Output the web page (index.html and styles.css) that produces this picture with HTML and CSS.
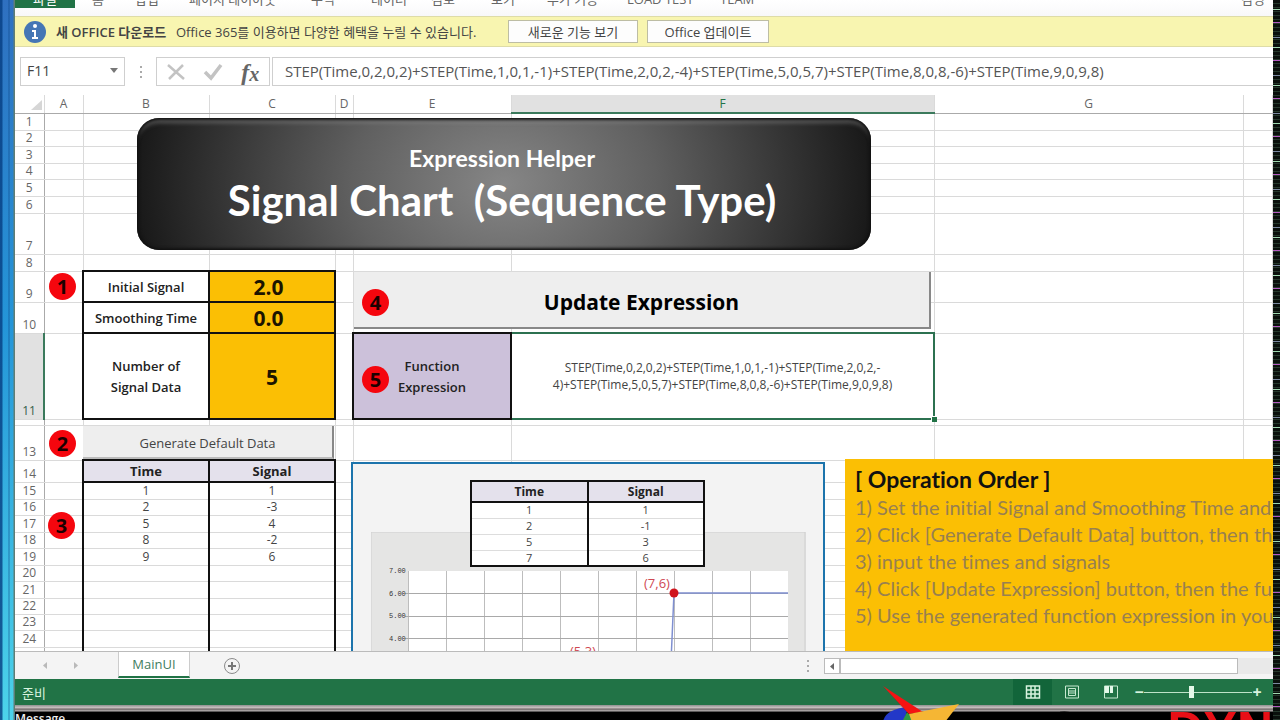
FILE: index.html
```html
<!DOCTYPE html>
<html lang="ko">
<head>
<meta charset="utf-8">
<title>Signal Chart</title>
<link rel="stylesheet" href="styles.css">
</head>
<body>
<div class="edge-left"></div>
<main class="app">
  <nav class="ribbon">
    <a class="file" href="#">파일</a>
    <a class="t-home" href="#">홈</a><a class="t-ins" href="#">삽입</a><a class="t-page" href="#">페이지 레이아웃</a><a class="t-short" href="#">수식</a><a class="t-short" href="#">데이터</a><a class="t-short" href="#">검토</a><a class="t-rev" href="#">보기</a><a class="t-add" href="#">추가 기능</a><a class="t-load" href="#">LOAD TEST</a><a class="t-team" href="#">TEAM</a>
    <span class="user">김영</span>
  </nav>
  <section class="notice">
    <svg width="24" height="24" viewBox="0 0 24 24"><circle cx="12" cy="12" r="11" fill="#4576b5"/><circle cx="12" cy="6" r="2" fill="#fff"/><path d="M9 10h4v7h2v2H9v-2h2v-5H9z" fill="#fff"/></svg>
    <strong>새 OFFICE 다운로드</strong>
    <span class="offer">Office 365를 이용하면 다양한 혜택을 누릴 수 있습니다.</span>
    <button class="b-new">새로운 기능 보기</button>
    <button class="b-upd">Office 업데이트</button>
  </section>
  <section class="formula">
    <div class="namebox"><input type="text" value="F11" aria-label="Name Box"><button aria-label="Open name list"><svg width="8" height="5"><path d="M0 0h8L4 5z" fill="#777"/></svg></button></div>
    <svg class="grip" width="3" height="14"><path d="M1 1h2v2H1zM1 6h2v2H1zM1 11h2v2H1z" fill="#aaa"/></svg>
    <div class="tools">
      <button aria-label="Cancel"><svg width="20" height="18"><path d="M2 2l16 14M17 2L3 16" stroke="#c3c3c3" stroke-width="2.500" fill="none"/></svg></button>
      <button aria-label="Enter"><svg width="20" height="18"><path d="M2 9l6 6L18 2" stroke="#c3c3c3" stroke-width="3.500" fill="none"/></svg></button>
      <button class="fx" aria-label="Insert Function">f<small>x</small></button>
    </div>
    <input class="expr" type="text" aria-label="Formula" value="STEP(Time,0,2,0,2)+STEP(Time,1,0,1,-1)+STEP(Time,2,0,2,-4)+STEP(Time,5,0,5,7)+STEP(Time,8,0,8,-6)+STEP(Time,9,0,9,8)">
  </section>
  <section class="sheet">
    <table class="grid">
      <colgroup><col class="c0"><col class="ca"><col class="cb"><col class="cb"><col class="cd"><col class="ce"><col class="cf"><col class="cg"><col></colgroup>
      <thead><tr><th class="corner"><svg width="11" height="10"><path d="M11 0v10H0z" fill="#d6d6d6"/></svg></th><th>A</th><th>B</th><th>C</th><th>D</th><th>E</th><th class="on">F</th><th>G</th><th></th></tr></thead>
      <tbody>
      <tr class="r17"><th>1</th><td></td><td></td><td></td><td></td><td></td><td></td><td></td><td></td></tr>
      <tr class="r16"><th>2</th><td></td><td></td><td></td><td></td><td></td><td></td><td></td><td></td></tr>
      <tr class="r17"><th>3</th><td></td><td></td><td></td><td></td><td></td><td></td><td></td><td></td></tr>
      <tr class="r16"><th>4</th><td></td><td></td><td></td><td></td><td></td><td></td><td></td><td></td></tr>
      <tr class="r17"><th>5</th><td></td><td></td><td></td><td></td><td></td><td></td><td></td><td></td></tr>
      <tr class="r17"><th>6</th><td></td><td></td><td></td><td></td><td></td><td></td><td></td><td></td></tr>
      <tr class="r41"><th>7</th><td></td><td></td><td></td><td></td><td></td><td></td><td></td><td></td></tr>
      <tr class="r17"><th>8</th><td></td><td></td><td></td><td></td><td></td><td></td><td></td><td></td></tr>
      <tr class="r31"><th>9</th><td></td><td class="box label">Initial Signal</td><td class="box value shift">2.0</td><td></td><td></td><td></td><td></td><td></td></tr>
      <tr class="r31"><th>10</th><td></td><td class="box label">Smoothing Time</td><td class="box value shift">0.0</td><td></td><td></td><td></td><td></td><td></td></tr>
      <tr class="r86"><th class="on">11</th><td></td><td class="box label">Number of<br>Signal Data</td><td class="box value five">5</td><td></td><td class="box label fn">Function<br>Expression</td><td class="active">STEP(Time,0,2,0,2)+STEP(Time,1,0,1,-1)+STEP(Time,2,0,2,-<br>4)+STEP(Time,5,0,5,7)+STEP(Time,8,0,8,-6)+STEP(Time,9,0,9,8)</td><td></td><td></td></tr>
      <tr class="r6"><th></th><td></td><td></td><td></td><td></td><td></td><td></td><td></td><td></td></tr>
      <tr class="r35"><th>13</th><td></td><td></td><td></td><td></td><td></td><td></td><td></td><td></td></tr>
      <tr class="r22"><th>14</th><td></td><td class="box head">Time</td><td class="box head">Signal</td><td></td><td></td><td></td><td></td><td></td></tr>
      <tr class="r17"><th>15</th><td></td><td class="side">1</td><td class="side">1</td><td></td><td></td><td></td><td></td><td></td></tr>
      <tr class="r16"><th>16</th><td></td><td class="side">2</td><td class="side">-3</td><td></td><td></td><td></td><td></td><td></td></tr>
      <tr class="r17"><th>17</th><td></td><td class="side">5</td><td class="side">4</td><td></td><td></td><td></td><td></td><td></td></tr>
      <tr class="r16"><th>18</th><td></td><td class="side">8</td><td class="side">-2</td><td></td><td></td><td></td><td></td><td></td></tr>
      <tr class="r17"><th>19</th><td></td><td class="side">9</td><td class="side">6</td><td></td><td></td><td></td><td></td><td></td></tr>
      <tr class="r16"><th>20</th><td></td><td class="side"></td><td class="side"></td><td></td><td></td><td></td><td></td><td></td></tr>
      <tr class="r17"><th>21</th><td></td><td class="side"></td><td class="side"></td><td></td><td></td><td></td><td></td><td></td></tr>
      <tr class="r16"><th>22</th><td></td><td class="side"></td><td class="side"></td><td></td><td></td><td></td><td></td><td></td></tr>
      <tr class="r16"><th>23</th><td></td><td class="side"></td><td class="side"></td><td></td><td></td><td></td><td></td><td></td></tr>
      <tr class="r17"><th>24</th><td></td><td class="side"></td><td class="side"></td><td></td><td></td><td></td><td></td><td></td></tr>
      <tr class="r17"><th>25</th><td></td><td class="side"></td><td class="side"></td><td></td><td></td><td></td><td></td><td></td></tr>
      </tbody>
    </table>

    <div class="banner"><div class="sub">Expression Helper</div><div class="title">Signal Chart&nbsp; (Sequence Type)</div></div>
    <button class="raised update">Update Expression</button>
    <button class="raised generate">Generate Default Data</button>
    <span class="badge n1">1</span><span class="badge n2">2</span><span class="badge n3">3</span><span class="badge n4">4</span><span class="badge n5">5</span>
    <span class="handle"></span>

    <div class="chart">
      <svg class="plot" width="435" height="130" viewBox="0 0 435 130">
        <path d="M0 0h435v130H0z" fill="#e5e5e4"/>
        <path d="M0 130V0h434v130" fill="none" stroke="#cfcfcf"/>
        <path d="M37 39h380v91H37z" fill="#fff"/>
        <path d="M37.500 39v91M75.500 39v91M113.500 39v91M151.500 39v91M189.500 39v91M227.500 39v91M265.500 39v91M303.500 39v91M341.500 39v91M379.500 39v91" stroke="#bdbdbd" fill="none"/>
        <path d="M34 61.500h383M34 84.500h383M34 106.500h383" stroke="#a9a9a9" fill="none"/>
        <path d="M300 130L303 61H417" stroke="#7f8fd0" stroke-width="1.500" fill="none"/>
        <circle cx="303" cy="61" r="4.500" fill="#d0141d"/>
        <g class="axis"><text x="18" y="41">7.00</text><text x="18" y="64">6.00</text><text x="18" y="86">5.00</text><text x="18" y="109">4.00</text></g>
        <g class="pt"><text x="273" y="56">(7,6)</text><text x="199" y="124">(5,3)</text></g>
      </svg>
      <table class="mini">
        <thead><tr><th>Time</th><th>Signal</th></tr></thead>
        <tbody><tr><td>1</td><td>1</td></tr><tr><td>2</td><td>-1</td></tr><tr><td>5</td><td>3</td></tr><tr><td>7</td><td>6</td></tr></tbody>
      </table>
    </div>

    <div class="note">
      <h2>[ Operation Order ]</h2>
      <p>1) Set the initial Signal and Smoothing Time and</p>
      <p>2) Click [Generate Default Data] button, then the</p>
      <p>3) input the times and signals</p>
      <p>4) Click [Update Expression] button, then the fun</p>
      <p>5) Use the generated function expression in your</p>
    </div>
  </section>
  <section class="tabs">
    <div class="arrows"><svg width="4" height="7"><path d="M4 0v7L0 3.500z" fill="#b9b9b9"/></svg><svg width="4" height="7"><path d="M0 0v7l4-3.500z" fill="#b9b9b9"/></svg></div>
    <button class="tab">MainUI</button>
    <button class="add" aria-label="New sheet"><svg width="18" height="18"><circle cx="9" cy="9" r="7.500" fill="none" stroke="#8b8b8b"/><path d="M9 5v8M5 9h8" stroke="#777" stroke-width="2"/></svg></button>
    <svg class="grip" width="3" height="14"><path d="M1 1h2v2H1zM1 6h2v2H1zM1 11h2v2H1z" fill="#aaa"/></svg>
    <div class="scroll"><button aria-label="Scroll left"><svg width="4" height="7"><path d="M4 0v7L0 3.500z" fill="#666"/></svg></button><div class="thumb"></div><div class="rest"></div></div>
  </section>
  <footer class="status">
    <span class="ready">준비</span>
    <button class="on" aria-label="Normal"><svg width="16" height="14"><path d="M1.500 1h13v12h-13zM6 1v12M10 1v12M1 5h14M1 9h14" fill="none" stroke="#d8f3df" stroke-width="1.500"/></svg></button>
    <button aria-label="Page Layout"><svg width="16" height="14"><path d="M1.500 1h13v12h-13zM4.500 3.500h7v7h-7zM5 6h6M5 8h6" fill="none" stroke="#c6e8cf"/></svg></button>
    <button aria-label="Page Break Preview"><svg width="16" height="14"><path d="M1.500 1h13v12h-13z" fill="none" stroke="#c6e8cf"/><path d="M2 1h4v7H2zM7 1h3v7H7z" fill="#e4f8e9"/></svg></button>
    <span class="zoom"><span class="sign">−</span><input type="range" min="0" max="100" value="44" aria-label="Zoom"><span class="sign">+</span></span>
  </footer>
  <div class="under">
    <span>Message</span>
    <svg class="mark" width="90" height="36" viewBox="0 0 90 36"><path d="M1 36q2-13 25-15l-4 15z" fill="#2338c8"/><path d="M20 36l5-10 10 10z" fill="#2f9a43"/><path d="M1 0l40 26-14 2z" fill="#f51313"/><path d="M1 0l26 28-4-4z" fill="#a80f0f"/><path d="M27 28l50-10-14 18H30z" fill="#f5b634"/></svg>
    <div class="brand">RECUR <b>DYN</b></div>
  </div>
</main>
<div class="edge-right"></div>
</body>
</html>
```

FILE: styles.css
```css
* { box-sizing: border-box; }
body {
  margin: 0; height: 100vh; overflow: hidden; display: flex; background: #fff;
  font-family: "Open Sans", "Noto Sans CJK KR", sans-serif; font-size: 12px; color: #444;
}
button, input { font: inherit; color: inherit; margin: 0; padding: 0; border: 0; background: none; }
button { display: flex; align-items: center; justify-content: center; white-space: nowrap; }
svg { display: block; flex: none; }

.edge-left {
  flex: none; width: 15px;
  background:
    linear-gradient(90deg, #063e82cc 0 2px, #fff0 3px 8px, #08408088 9px, #fff0 10px 13px, #5f7d74 14px),
    linear-gradient(#2f70c0, #2495d8 45%, #4cd3ea);
}
.edge-right {
  flex: none; width: 7px;
  background:
    repeating-linear-gradient(#0000 0 9px, #9fd8b0 9px 10px, #0000 10px 22px, #b45ac0 22px 23px, #0000 23px 37px, #7a88a0 37px 38px),
    repeating-linear-gradient(#0a100c 0 3px, #26382c 3px 4px);
}
.app { flex: 1; min-width: 0; display: flex; flex-direction: column; }
.app > * { flex: none; }

.ribbon { height: 16px; padding-bottom: 8px; display: flex; align-items: flex-end; overflow: hidden; background: linear-gradient(#fff, #f8f8fa); }
.ribbon a, .ribbon .user { color: #666; text-decoration: none; line-height: 18px; white-space: nowrap; font-size: 13px; }
.ribbon .file { width: 60px; margin-right: 17px; text-align: center; color: #fff; background: #217346; }
.t-home { width: 43px; }
.t-ins { width: 54px; }
.t-page { width: 122px; }
.t-short { width: 60px; }
.t-rev { width: 56px; }
.t-add { width: 80px; }
.t-load { width: 93px; }
.t-team { flex: 1; }
.ribbon .user { padding-right: 8px; }

.notice { height: 31px; display: flex; align-items: center; padding-left: 8px; background: #f8f5b0; border: solid #dedca8; border-width: 1px 0; white-space: nowrap; font-size: 13px; }
.notice strong { margin-left: 9px; width: 120px; font-weight: 600; }
.offer { width: 332px; }
.notice button { height: 23px; background: #fdfdfd; border: 1px solid #bdbda4; }
.b-new { width: 130px; margin-right: 9px; }
.b-upd { width: 122px; }

.formula { height: 48px; padding-top: 10px; display: flex; align-items: flex-start; }
.namebox { margin-left: 5px; width: 105px; height: 29px; display: flex; border: 1px solid #cfcfcf; }
.namebox input { flex: 1; min-width: 0; padding: 0 0 2px 6px; font-size: 14px; }
.namebox button { width: 20px; padding-bottom: 2px; }
.formula .grip { margin: 8px 14px 0 14px; }
.tools { width: 114px; height: 29px; display: flex; border: 1px solid #cfcfcf; margin-right: 2px; }
.tools button { flex: 1; }
.fx { font: italic bold 24px/24px "Liberation Serif", serif; color: #666; }
.fx small { font-size: 20px; padding-top: 5px; }
.expr { flex: 1; min-width: 0; height: 29px; padding: 0 0 2px 12px; border: 1px solid #cfcfcf; border-right: 0; font-size: 15px; color: #555; }

.app > .sheet { flex: 1; min-height: 0; position: relative; overflow: hidden; }
.grid { width: 100%; table-layout: fixed; border-collapse: collapse; line-height: 14px; text-align: center; }
.c0 { width: 29px; }
.ca { width: 39px; }
.cb { width: 126px; }
.cd { width: 18px; }
.ce { width: 158px; }
.cf { width: 423px; }
.cg { width: 309px; }
.grid th, .grid td { padding: 0; border: 1px solid #dadada; }
.grid th { font-weight: 400; color: #666; border-left: 0; border-top: 0; }
.grid thead th { height: 18px; border-bottom-color: #aaa; }
.grid thead .on { background: #e1e1e1; color: #217346; border-bottom: 2px solid #3b7a5c; }
.corner svg { margin: 2px 0 0 16px; }
.grid tbody th { vertical-align: bottom; line-height: 12px; padding-bottom: 2px; border-right-color: #aaa; }
.grid tbody .on { background: #e1e1e1; border-right: 2px solid #3b7a5c; color: #355f4b; }
.r6 { height: 6px; }
.grid .r6 td, .grid .r6 th { line-height: 0; padding: 0; }
.r16 { height: 16px; }
.r17 { height: 17px; }
.r22 { height: 22px; }
.r31 { height: 31px; }
.r35 { height: 35px; }
.r41 { height: 41px; }
.r86 { height: 86px; }
.grid .box { border: 2px solid #111; }
.grid .side { border-left: 2px solid #111; border-right: 2px solid #111; }
.grid .label { font-size: 13px; font-weight: 600; line-height: 21px; padding-top: 2px; color: #222; }
.grid .value { background: #fbbf04; font-size: 21px; line-height: 24px; padding-top: 1px; font-weight: 700; color: #1c1400; }
.grid .shift { padding-right: 7px; }
.grid .head { background: #e4e1ec; font-size: 13px; font-weight: 700; color: #222; }
.grid .fn { background: #ccc1da; }
.grid .active { border: 2px solid #2c7150; line-height: 17px; white-space: nowrap; }

.banner {
  position: absolute; left: 122px; top: 23px; width: 734px; height: 132px; border-radius: 22px;
  background: radial-gradient(ellipse 380px 300px at 50% 50%, #868686, #606060 40%, #343434 75%, #151515);
  box-shadow: inset 0 0 3px 2px #111, inset 0 7px 4px -2px #8888;
  color: #fff; text-align: center; font-family: Lato, sans-serif; font-weight: 700; padding: 26px 4px 0 0;
  font-variant-ligatures: none;
}
.sub { font-size: 23px; line-height: 28px; }
.title { font-size: 42px; line-height: 56px; }
.raised { position: absolute; background: #eee; border: solid #888; border-width: 0 2px 2px 0; }
.update { left: 339px; top: 177px; width: 577px; height: 57px; padding-top: 4px; font-size: 21px; font-weight: 700; color: #000; }
.generate { left: 68px; top: 331px; width: 251px; height: 33px; padding-top: 2px; border-bottom-color: #bbb; font-size: 13px; }
.badge { position: absolute; width: 27px; height: 27px; border-radius: 50%; background: #f5060e; color: #1c0000; font-size: 20px; line-height: 27px; font-weight: 700; text-align: center; }
.n1 { left: 34px; top: 178px; }
.n2 { left: 34px; top: 335px; }
.n3 { left: 33px; top: 417px; }
.n4 { left: 347px; top: 194px; }
.n5 { left: 347px; top: 271px; }
.handle { position: absolute; left: 916px; top: 321px; width: 6px; height: 6px; background: #217346; border: solid #fff; border-width: 1px 0 0 1px; }

.chart { position: absolute; left: 336px; top: 367px; width: 474px; bottom: -20px; border: 2px solid #1c74ac; background: #f3f3f3; }
.plot { position: absolute; left: 18px; top: 68px; }
.axis { font: 7px "Liberation Mono", monospace; fill: #333; }
.pt { font-size: 13px; fill: #cf4852; }
.mini { position: absolute; left: 117px; top: 16px; width: 235px; border-collapse: collapse; table-layout: fixed; background: #fff; border: 2px solid #111; font-size: 11px; line-height: 14px; text-align: center; }
.mini th { height: 21px; padding: 0; font-size: 12px; background: #e4e1ec; border: 2px solid #111; color: #222; }
.mini td { height: 16px; padding: 0; border: solid #ddd; border-width: 1px 0; border-right: 2px solid #111; }

.note { position: absolute; left: 830px; top: 364px; right: 0; bottom: 0; padding: 6px 0 0 10px; overflow: hidden; background: #fbbf04; color: #988050; white-space: nowrap; font: 20px/27px Lato, sans-serif; font-variant-ligatures: none; }
.note h2 { margin: 0; font-size: 23px; font-weight: 700; line-height: 29px; color: #111; }
.note p { margin: 0; }

.tabs { height: 28px; display: flex; background: #f4f4f4; border-top: 1px solid #bbb; }
.arrows { width: 103px; padding: 10px 40px 0 28px; display: flex; justify-content: space-between; }
.tab { width: 72px; height: 26px; background: #fff; border: solid #ccc; border-width: 0 1px; border-bottom: 2px solid #217346; color: #3f7d60; font-size: 13px; }
.add { margin: 4px auto 0 33px; height: 20px; }
.tabs .grip { margin: 7px 15px 0 0; }
.scroll { width: 449px; height: 16px; margin-top: 6px; display: flex; background: #fff; }
.scroll button { width: 16px; border: 1px solid #bbb; }
.thumb { flex: 1; border: 1px solid #bbb; }
.rest { width: 35px; background: #e9e9e9; }

.status { height: 26px; display: flex; align-items: stretch; background: #217346; color: #d8f3df; }
.ready { margin-right: auto; padding-left: 7px; line-height: 28px; font-size: 13px; }
.status button { width: 39px; }
.status .on { background: #12653a; }
.zoom { display: flex; align-items: center; padding: 0 11px 0 4px; }
.sign { width: 10px; text-align: center; font-size: 16px; font-weight: 700; line-height: 20px; }
.zoom input { appearance: none; width: 108px; height: 12px; background: linear-gradient(#bfe3c9, #bfe3c9) center / 100% 1px no-repeat; }
.zoom input::-webkit-slider-thumb { appearance: none; width: 5px; height: 12px; background: #e4f8e9; }

.under { height: 15px; position: relative; background: linear-gradient(#999 0 1px, #c4bcbc 2px 3px, #6b6464 4px, #b9b4b4 6px, #000 7px); color: #eee; }
.under > span { display: block; height: 15px; padding-top: 6px; line-height: 16px; font-weight: 600; overflow: hidden; }
.mark { position: absolute; left: 867px; top: -19px; }
.brand { position: absolute; right: 0; top: 0; height: 15px; overflow: hidden; font: bold 50px/50px "Liberation Sans", sans-serif; color: #000; white-space: nowrap; }
.brand b { color: #e80f16; }
```
